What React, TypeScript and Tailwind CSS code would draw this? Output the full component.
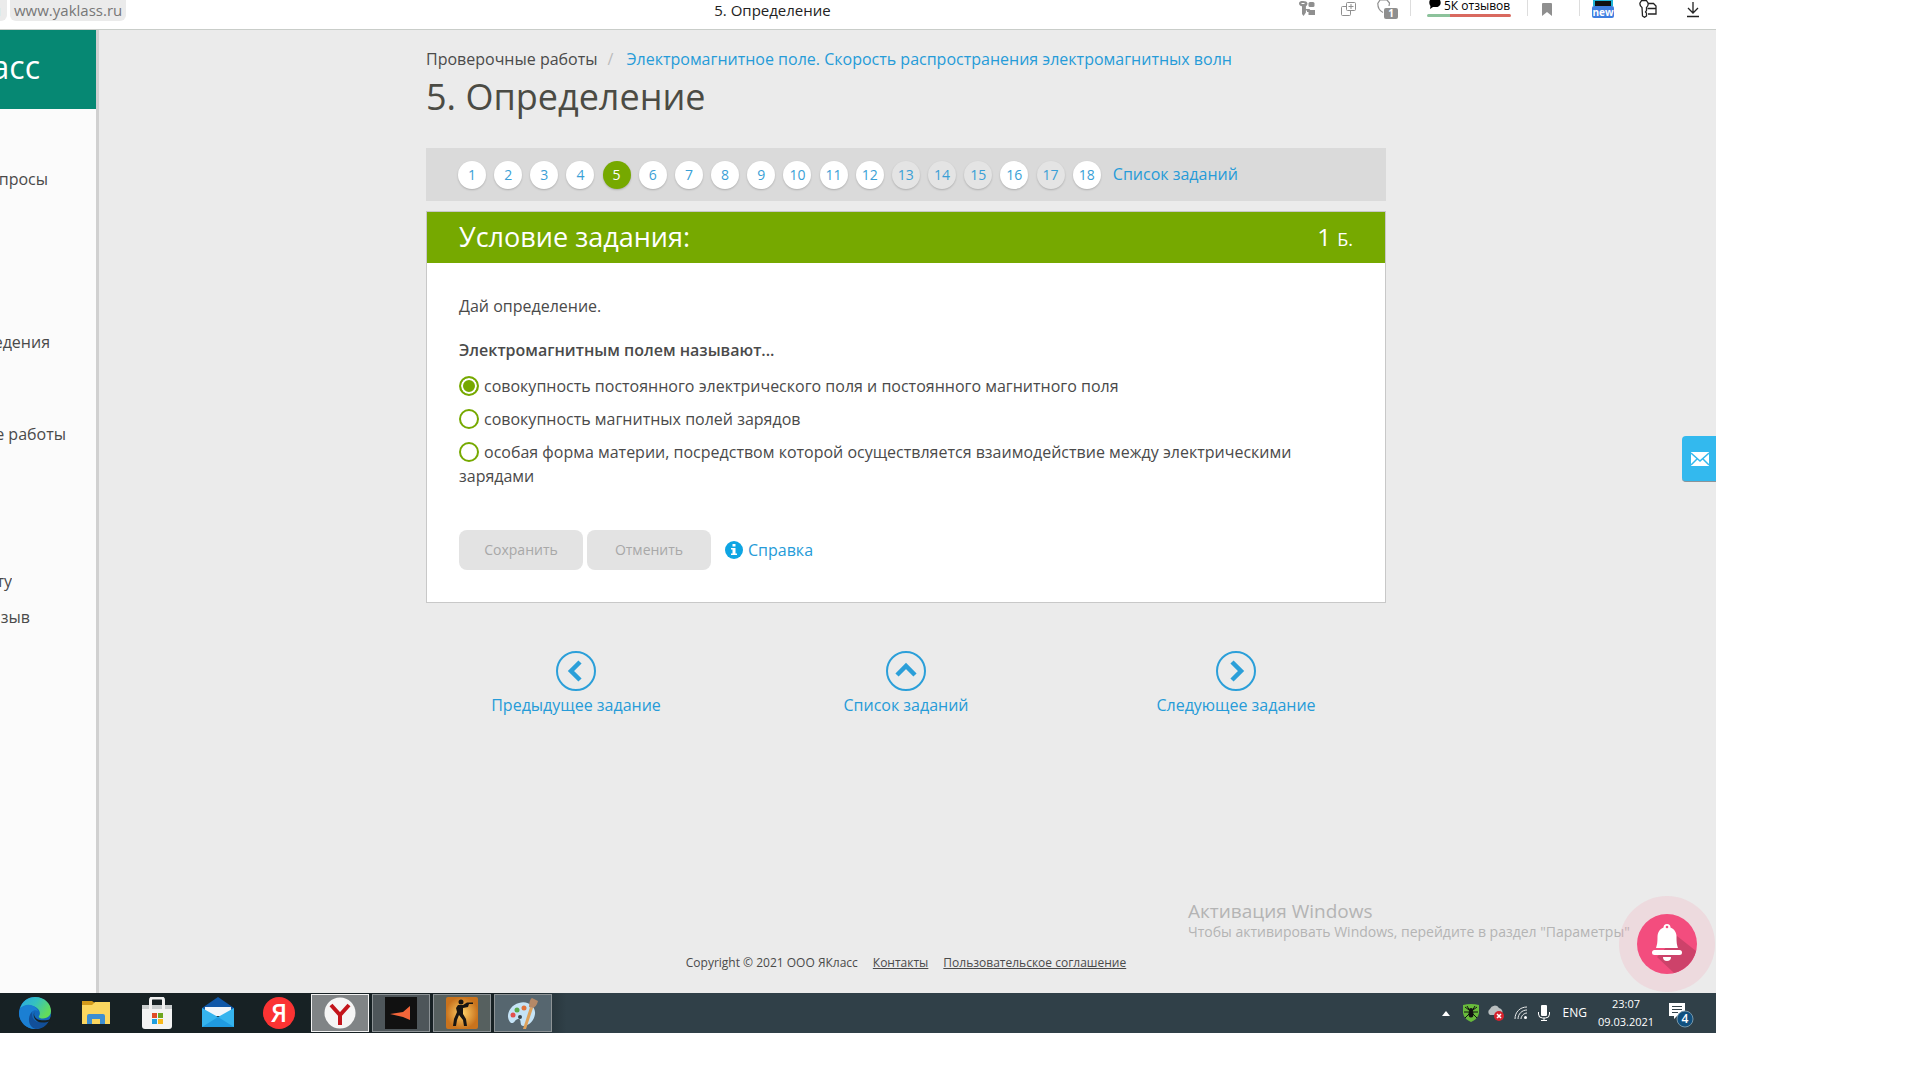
import { useState, type ReactNode } from "react";

const disabledTasks = [13, 14, 15, 17];
const tasks = Array.from({ length: 18 }, (_, i) => i + 1);

const answers = [
  "совокупность постоянного электрического поля и постоянного магнитного поля",
  "совокупность магнитных полей зарядов",
  "особая форма материи, посредством которой осуществляется взаимодействие между электрическими зарядами",
];

function BrowserBar() {
  return (
    <header className="relative flex h-[30px] shrink-0 items-start border-b border-[#c9cdc9] bg-white">
      <div className="flex h-[21px] flex-1 gap-[3px]">
        <div className="flex w-[7px] justify-end overflow-hidden rounded-br-md bg-[#ebebeb] pr-[6px] text-[15px] leading-5 text-[#777]">
          <span>u</span>
        </div>
        <a href="#address" className="rounded-b-md bg-[#ebebeb] px-1 text-[15px] leading-5 text-[#777]">
          www.yaklass.ru
        </a>
      </div>
      <div className="absolute inset-x-0 top-0 mr-[171px] text-center text-[15px] leading-5 text-[#222]">
        5. Определение
      </div>
      <div className="relative flex h-5 items-start text-[#8f8f8f]">
        <svg width="17" height="17" viewBox="0 0 17 17" fill="currentColor">
          <path d="M0 3.5C0 1.6 1.6 1 4 1s4.500.8 4.500 2.600c0 1.200-.6 2.200-1.600 2.700V9H8v1.500H6.900v2L4.600 16 3 14V6.300C1.200 6 0 5 0 3.500z" />
          <rect x="9.500" y="2" width="6" height="5" rx="1.500" />
          <path d="M8 9h2.500l.8 1h4.700v5H9.500V12H8z" />
          <path d="M2.500 3h3v1h-3z" fill="#fff" />
        </svg>
        <svg className="ml-[25px]" width="15" height="17" viewBox="0 0 15 17" fill="none" stroke="currentColor">
          <rect x="5.500" y="2.500" width="9" height="8" rx="1" />
          <path d="M5 6.500H1.500a1 1 0 0 0-1 1v7a1 1 0 0 0 1 1h7a1 1 0 0 0 1-1V11M10 4v5M7.500 6.500h5" />
        </svg>
        <svg className="ml-[21px]" width="21" height="20" viewBox="0 0 21 20">
          <path d="M3 0 .8 3.500C.8 8 3 11 6 12.500M3 0h7l2.500 3-.5 3" fill="none" stroke="currentColor" strokeWidth="1.200" />
          <rect x="7" y="8" width="14" height="11" rx="2" fill="currentColor" />
          <text x="14" y="17" textAnchor="middle" fontFamily="Open Sans" fontWeight="bold" fontSize="10" fill="#fff">1</text>
        </svg>
        <span className="ml-[12px] h-4 w-px bg-[#ddd]" />
        <a href="#reviews" className="ml-[16px] block w-[84px] text-black">
          <span className="flex h-[14px] items-start gap-[3px] pl-[2px] text-xs leading-3">
            <svg className="shrink-0" width="12" height="9" viewBox="0 0 12 9">
              <path d="M1 0h10c1.500 3 .5 6-2.500 7H4L1 9l.5-3C-.2 4 .2 1 1 0z" />
            </svg>
            <span className="whitespace-nowrap">5К отзывов</span>
          </span>
          <span className="flex h-[3px] overflow-hidden rounded-full">
            <span className="w-[23px] bg-[#8cc29b]" />
            <span className="flex-1 bg-[#d9695f]" />
          </span>
        </a>
        <span className="ml-[16px] h-4 w-px bg-[#ddd]" />
        <svg className="ml-[14px]" width="11" height="17" viewBox="0 0 11 17" fill="currentColor">
          <path d="M0 4a1 1 0 0 1 1-1h8a1 1 0 0 1 1 1v12l-5-4-5 4z" />
        </svg>
        <span className="ml-[26px] h-4 w-px bg-[#ddd]" />
        <svg className="ml-[12px]" width="22" height="19" viewBox="0 0 22 19">
          <path d="M1 0h20v6H1z" fill="#1fb6d8" />
          <path d="M3 1h16v5H3z" fill="#111" />
          <rect y="6" width="22" height="12" rx="2" fill="#3f7ee0" />
          <text x="11" y="16" textAnchor="middle" fontFamily="Open Sans" fontWeight="bold" fontSize="10" fill="#fff">new</text>
        </svg>
        <svg className="ml-[25px]" width="18" height="18" viewBox="0 0 18 18" fill="none" stroke="#222" strokeWidth="1.300">
          <path d="M3 7.500C1 6 .7 4.500 1 3L2.500.7h5L9 3c.4 2 0 3.500-1.500 4.500v3L6.500 12l1 1.200V16l-2 1.300L3.500 16z" />
          <path d="M9 3.500h5.500L17 6v8H9M8.500 8.500H17" />
        </svg>
        <svg className="mr-[17px] ml-[30px]" width="12" height="18" viewBox="0 0 12 18" fill="none" stroke="#222" strokeWidth="1.300">
          <path d="M6 2v11M1 8l5 5 5-5M0 16.500h12" />
        </svg>
      </div>
    </header>
  );
}

function MenuItem({ className, children }: { className: string; children: ReactNode }) {
  return (
    <li className={`flex h-6 justify-end overflow-hidden whitespace-nowrap ${className}`}>
      <a href="#menu">{children}</a>
    </li>
  );
}

function Sidebar() {
  return (
    <aside className="w-24 shrink-0 bg-[#fbfbfb] text-base leading-6 text-[#4a4a4a]">
      <a href="#home" className="flex h-[79px] w-full overflow-hidden bg-[#068873]">
        <span className="flex w-10 justify-end text-[32px] leading-[74px] text-white">асс</span>
      </a>
      <ul>
        <MenuItem className="mt-[58px] w-[48px]">просы</MenuItem>
        <MenuItem className="mt-[139px] w-[50px]">едения</MenuItem>
        <MenuItem className="mt-[68px] w-[66px]">е работы</MenuItem>
        <MenuItem className="mt-[123px] w-[12px]">ту</MenuItem>
        <MenuItem className="mt-[12px] w-[30px]">зыв</MenuItem>
      </ul>
    </aside>
  );
}

function taskClass(task: number) {
  const base = "mx-[2px] inline-block size-7 rounded-full text-center text-sm leading-7 shadow-[0_1px_2px_#00000033]";
  if (task === 5) return `${base} bg-[#76a900] text-white`;
  if (disabledTasks.includes(task)) return `${base} bg-[#e4e4e4] text-[#3a9fd6]`;
  return `${base} bg-white text-[#3a9fd6]`;
}

function TaskPager() {
  return (
    <nav className="mt-[26px] h-[53px] bg-[#dadada] px-[30px] pt-3 text-base leading-7 whitespace-nowrap">
      {tasks.map((task) => (
        <span key={task}>
          <a href={`#task-${task}`} className={taskClass(task)}>{task}</a>{" "}
        </span>
      ))}
      <a href="#list" className="ml-[6px] text-[#269bd8]">Список заданий</a>
    </nav>
  );
}

function TaskCard() {
  const [answer, setAnswer] = useState(0);

  return (
    <section className="mt-[10px] border border-[#c8c8c8] bg-white">
      <div className="flex h-[51px] items-center justify-between bg-[#76a900] px-8 pb-[2px] text-white">
        <h2 className="text-[27px] leading-10">Условие задания:</h2>
        <span className="text-2xl leading-10">
          1 <span className="text-lg">Б.</span>
        </span>
      </div>
      <div className="px-8 pt-[31px] pb-8">
        <p className="mb-5 leading-6">Дай определение.</p>
        <fieldset>
          <legend className="mb-3 font-semibold leading-6">Электромагнитным полем называют...</legend>
          {answers.map((text, i) => (
            <label key={text} className="mb-[9px] block leading-6">
              <input
                type="radio"
                name="answer"
                checked={answer === i}
                onChange={() => setAnswer(i)}
                className="mr-[5px] size-5 appearance-none rounded-full border-2 border-[#76a900] bg-white align-[-4px] checked:bg-[#76a900] checked:shadow-[inset_0_0_0_2px_#fff]"
              />
              {text}
            </label>
          ))}
        </fieldset>
        <div className="mt-[33px] flex items-center">
          <button type="button" className="h-10 w-[124px] rounded-lg bg-[#e3e3e3] text-sm text-[#a8a8a8]">Сохранить</button>
          <button type="button" className="ml-1 h-10 w-[124px] rounded-lg bg-[#e3e3e3] text-sm text-[#a8a8a8]">Отменить</button>
          <a href="#help" className="ml-[14px] flex items-center gap-[5px] text-[#269bd8]">
            <svg width="18" height="18" viewBox="0 0 18 18">
              <circle cx="9" cy="9" r="9" fill="#0ea5e3" />
              <path d="M7.500 3h3v2.500h-3zM6 7h4.500v5.500H12V14H6v-1.500h1.500v-4H6z" fill="#fff" />
            </svg>
            Справка
          </a>
        </div>
      </div>
    </section>
  );
}

function NavLink({ label, d }: { label: string; d: string }) {
  return (
    <a href="#nav" className="flex flex-col items-center gap-[2px] leading-6">
      <svg width="40" height="40" viewBox="0 0 40 40" fill="none" stroke="#2b9fd9">
        <circle cx="20" cy="20" r="19" strokeWidth="2" />
        <path d={d} strokeWidth="4.500" />
      </svg>
      {label}
    </a>
  );
}

function Bell() {
  return (
    <button type="button" aria-label="Уведомления" className="absolute right-px bottom-px rounded-full bg-[#f5a6b8]/25 p-[18px]">
      <svg width="60" height="60" viewBox="0 0 60 60">
        <circle cx="30" cy="30" r="30" fill="#f34d7e" />
        <path d="M40 22l19 15a30 30 0 0 1-22 22L20 43z" fill="#cd426a" />
        <path d="M30 10a3.500 3.500 0 0 1 3.500 3.500c4 1.500 6 5 6 9.500 0 6 .5 8 1.500 11H19c1-3 1.500-5 1.500-11 0-4.500 2-8 6-9.500A3.500 3.500 0 0 1 30 10z" fill="#fff" />
        <circle cx="30" cy="13" r="1.300" fill="#f34d7e" />
        <rect x="15" y="36" width="30" height="5" rx="2.500" fill="#fff" />
        <path d="M26 43h8a4 4 0 0 1-8 0z" fill="#fff" />
      </svg>
    </button>
  );
}

const apps = [
  {
    name: "Edge",
    frame: "",
    icon: (
      <>
        <defs>
          <linearGradient id="edge-top" x1="0" y1="0" x2="1" y2="0.500">
            <stop offset="0" stopColor="#2aa6e4" />
            <stop offset="0.500" stopColor="#35c1c0" />
            <stop offset="1" stopColor="#63dc5a" />
          </linearGradient>
        </defs>
        <circle cx="16" cy="16" r="16" fill="#1368bb" />
        <path d="M1 12C3 4 9 0 16 0c10 0 16 7 16 14 0 5-4 7.500-8 7.500-3 0-5-1-4-2.500 1.500-2 1-5-1-7C14 7 5 7 1 12z" fill="url(#edge-top)" />
        <path d="M0 16c0-5 5-9 11-8 4 .5 7 3 8 6-4-2-8 1-8 6 0 6 4 10 9 11.500C9 34 0 26 0 16z" fill="#1b7fd3" />
        <path d="M13 15c-1 8 5 13 17 9-3 5-7 8-13 8C9 30 8 20 13 15z" fill="#124f99" />
        <path d="M16 14c-2 3-1 8 5 9 4 .8 8 .2 11-1l-1 2c-5 2-10 2-13 0-4-3-4-7-2-10z" fill="#172124" />
      </>
    ),
  },
  {
    name: "Проводник",
    frame: "",
    icon: (
      <>
        <path d="M2 4h10l3 2-2 3H2z" fill="#d39a1a" />
        <path d="M2 8h10l3-3h15v22H2z" fill="#fbd65f" />
        <path d="M7 27v-8a2 2 0 0 1 2-2h14a2 2 0 0 1 2 2v8h-5v-5h-8v5z" fill="#3d8ed2" />
      </>
    ),
  },
  {
    name: "Store",
    frame: "",
    icon: (
      <>
        <path d="M1 8h30v8H1z" fill="#c9cdce" />
        <path d="M9.500 12V3a2 2 0 0 1 2-2h9a2 2 0 0 1 2 2v9" fill="none" stroke="#f0f0f0" strokeWidth="3" />
        <path d="M1 12h30v17a3 3 0 0 1-3 3H4a3 3 0 0 1-3-3z" fill="#f3f3f3" />
        <path d="M11 16h5v5h-5z" fill="#e04a26" />
        <path d="M17 16h5v5h-5z" fill="#6da51f" />
        <path d="M11 22h5v5h-5z" fill="#1f9fdf" />
        <path d="M17 22h5v5h-5z" fill="#f8b81a" />
      </>
    ),
  },
  {
    name: "Почта",
    frame: "",
    icon: (
      <>
        <path d="M0 11 16 0l16 11v4H0z" fill="#1058a8" />
        <path d="M3 10h26v9H3z" fill="#f2f6fa" />
        <path d="M0 11l16 9 16-9v19H0z" fill="#35b4ee" />
        <path d="M0 30l16-10 16 10z" fill="#209be0" />
      </>
    ),
  },
  {
    name: "Яндекс",
    frame: "",
    icon: (
      <>
        <circle cx="16" cy="16" r="16" fill="#fb3333" />
        <text x="16" y="25" textAnchor="middle" fontFamily="Open Sans" fontWeight="600" fontSize="25" fill="#fff">Я</text>
      </>
    ),
  },
  {
    name: "Яндекс Браузер",
    frame: "border border-[#f2f2f2] bg-[#808486]",
    icon: (
      <>
        <circle cx="16" cy="16" r="15.500" fill="#f5f5f5" />
        <path d="M7 8l9 10 9-10M16 17v11" fill="none" stroke="#c3151c" strokeWidth="4" />
      </>
    ),
  },
  {
    name: "Launcher",
    frame: "border border-[#8d9396] bg-[#4e565a]",
    icon: (
      <>
        <path d="M0 0h32v32H0z" fill="#111" />
        <path d="M5 17l13-2 7-6v14l-7-3z" fill="#f4663a" />
      </>
    ),
  },
  {
    name: "Counter-Strike",
    frame: "border border-[#8d9396] bg-[#56605f]",
    icon: (
      <>
        <defs>
          <radialGradient id="cs">
            <stop offset="0" stopColor="#ffd36a" />
            <stop offset="1" stopColor="#c9731d" />
          </radialGradient>
        </defs>
        <rect width="32" height="32" rx="2" fill="url(#cs)" />
        <circle cx="15" cy="5" r="2.500" fill="#171513" />
        <path d="M12 8h5l4-2.500h6v1.500h-4l-1 3-5 1v6l3 5 1 7h-3l-1-6-4-5-2 5-1 6H7l1-7 3-7-1-4z" fill="#171513" />
      </>
    ),
  },
  {
    name: "Paint",
    frame: "border border-[#8d9396] bg-[#56666f]",
    icon: (
      <>
        <path d="M12 6c9-3 17 4 16 11-1 8-7 12-12 12-4-1-1-6-4-7-4-1-4 5-8 4C-2 21 1 9 12 6z" fill="#c5e3f6" />
        <circle cx="6" cy="18" r="2.500" fill="#e2504d" />
        <circle cx="10" cy="13" r="2.500" fill="#59a84c" />
        <circle cx="17" cy="11" r="2.500" fill="#e0723b" />
        <circle cx="13" cy="20" r="2" fill="#39464d" />
        <path d="M23 10l3 1-7 21h-3z" fill="#dda15a" />
        <path d="M22 10c0-4 1-8 3-9l6 3c-1 4-3 6-5 7z" fill="#b58967" />
      </>
    ),
  },
];

function Tray() {
  return (
    <div className="ml-auto flex items-center pr-[22px] text-white">
      <svg width="8" height="5" viewBox="0 0 8 5" fill="#fff">
        <path d="M4 0l4 5H0z" />
      </svg>
      <svg className="ml-[13px]" width="16" height="18" viewBox="0 0 16 18">
        <path d="M0 1q8-2 16 0v8q-1 6-8 9-7-3-8-9z" fill="#68bb3b" />
        <path d="M2 3l4 3M14 3l-4 3M1 8h14M2 14l4-4M14 14l-4-4M4 2l3 5M12 2L9 7" stroke="#111" />
        <circle cx="8" cy="6" r="2" fill="#111" />
        <ellipse cx="8" cy="10" rx="2.500" ry="3.500" fill="#111" />
      </svg>
      <svg className="ml-[8px]" width="17" height="16" viewBox="0 0 17 16">
        <path d="M3 10a3.500 3.500 0 0 1 0-6 5 5 0 0 1 9-1 4 4 0 0 1 2 7z" fill="#b9bfc0" />
        <circle cx="12" cy="11" r="5" fill="#d5222d" />
        <path d="M10 9l4 4M14 9l-4 4" stroke="#fff" strokeWidth="1.500" />
      </svg>
      <svg className="ml-[10px]" width="14" height="14" viewBox="0 0 14 14" fill="none" stroke="#e8eaea">
        <path d="M1 13C1 6 6 1 13 1M4 13c0-5 4-9 9-9M7 13c0-3 3-6 6-6" />
        <circle cx="11.500" cy="11.500" r="1.500" fill="#fff" stroke="none" />
      </svg>
      <svg className="ml-[10px]" width="12" height="16" viewBox="0 0 12 16" fill="none" stroke="#fff">
        <rect x="3" y="0" width="6" height="11" rx="1" fill="#fff" stroke="none" />
        <path d="M.5 7v2a4 4 0 0 0 4 4h3a4 4 0 0 0 4-4V7M6 13v2.500M3 15.500h6" />
      </svg>
      <span className="ml-[13px] text-xs">ENG</span>
      <div className="ml-[11px] flex w-14 flex-col items-center text-[11px] leading-[18px]">
        <span>23:07</span>
        <span>09.03.2021</span>
      </div>
      <svg className="mt-1 ml-[15px]" width="25" height="26" viewBox="0 0 25 26">
        <path d="M0 1h16v13H8l-3 3v-3H0z" fill="#fff" />
        <path d="M3 4.500h10M3 7.500h10M3 10.500h6" stroke="#33424a" />
        <circle cx="16" cy="17" r="8" fill="#10507f" stroke="#7796a8" />
        <text x="16" y="21" textAnchor="middle" fontFamily="Open Sans" fontWeight="600" fontSize="12" fill="#fff">4</text>
      </svg>
    </div>
  );
}

function Taskbar() {
  return (
    <footer className="flex h-10 shrink-0 bg-gradient-to-r from-[#172124] from-30% to-[#304048] to-33% pl-[6px]">
      <div className="flex items-center gap-[3px]">
        {apps.map((app) => (
          <button key={app.name} type="button" aria-label={app.name} className={`flex h-[38px] w-[58px] items-center justify-center ${app.frame}`}>
            <svg width="32" height="32" viewBox="0 0 32 32">{app.icon}</svg>
          </button>
        ))}
      </div>
      <Tray />
    </footer>
  );
}

export default function App() {
  return (
    <div className="flex min-h-screen flex-col bg-white pr-[204px] pb-[47px] font-['Open_Sans',sans-serif]">
      <BrowserBar />
      <div className="relative flex flex-1 bg-[#ebebeb]">
        <Sidebar />
        <main className="flex flex-1 flex-col text-base text-[#4a4a4a] shadow-[inset_3px_0_0_#d0d0d0]">
          <div className="mx-auto w-full max-w-[960px] pt-[17px]">
            <div className="flex leading-6">
              <a href="#tests">Проверочные работы</a>
              <span className="mr-[13px] ml-[10px] text-[#bbb]">/</span>
              <a href="#topic" className="text-[#269bd8]">Электромагнитное поле. Скорость распространения электромагнитных волн</a>
            </div>
            <h1 className="text-4xl leading-[51px] text-[#4b4b44]">5. Определение</h1>
            <TaskPager />
            <TaskCard />
            <nav className="-mx-[15px] mt-12 grid grid-cols-3 text-[#269bd8]">
              <NavLink label="Предыдущее задание" d="M24 11l-9 9 9 9" />
              <NavLink label="Список заданий" d="M11 24l9-9 9 9" />
              <NavLink label="Следующее задание" d="M16 11l9 9-9 9" />
            </nav>
          </div>
          <div className="mt-auto flex justify-center gap-[15px] pb-[21px] text-xs leading-[18px]">
            <span>Copyright © 2021 ООО ЯКласс</span>
            <a href="#contacts" className="underline">Контакты</a>
            <a href="#terms" className="underline">Пользовательское соглашение</a>
          </div>
        </main>
        <a href="#mail" aria-label="Написать" className="absolute top-[406px] right-0 flex h-[46px] w-[34px] items-center justify-center rounded-l border-b border-[#8b9499] bg-[#33b9ee] pl-[2px]">
          <svg width="18" height="14" viewBox="0 0 18 14">
            <path d="M0 0h18v14H0z" fill="#fff" />
            <path d="M0 1l9 8 9-8M0 13l6-6M18 13l-6-6" fill="none" stroke="#33b9ee" strokeWidth="1.500" />
          </svg>
        </a>
        <div className="absolute right-[76px] bottom-[52px] w-[452px] whitespace-nowrap text-[#b4b4b4]">
          <p className="text-[19px] leading-6">Активация Windows</p>
          <p className="text-sm leading-[18px]">Чтобы активировать Windows, перейдите в раздел "Параметры"</p>
        </div>
        <Bell />
      </div>
      <Taskbar />
    </div>
  );
}
